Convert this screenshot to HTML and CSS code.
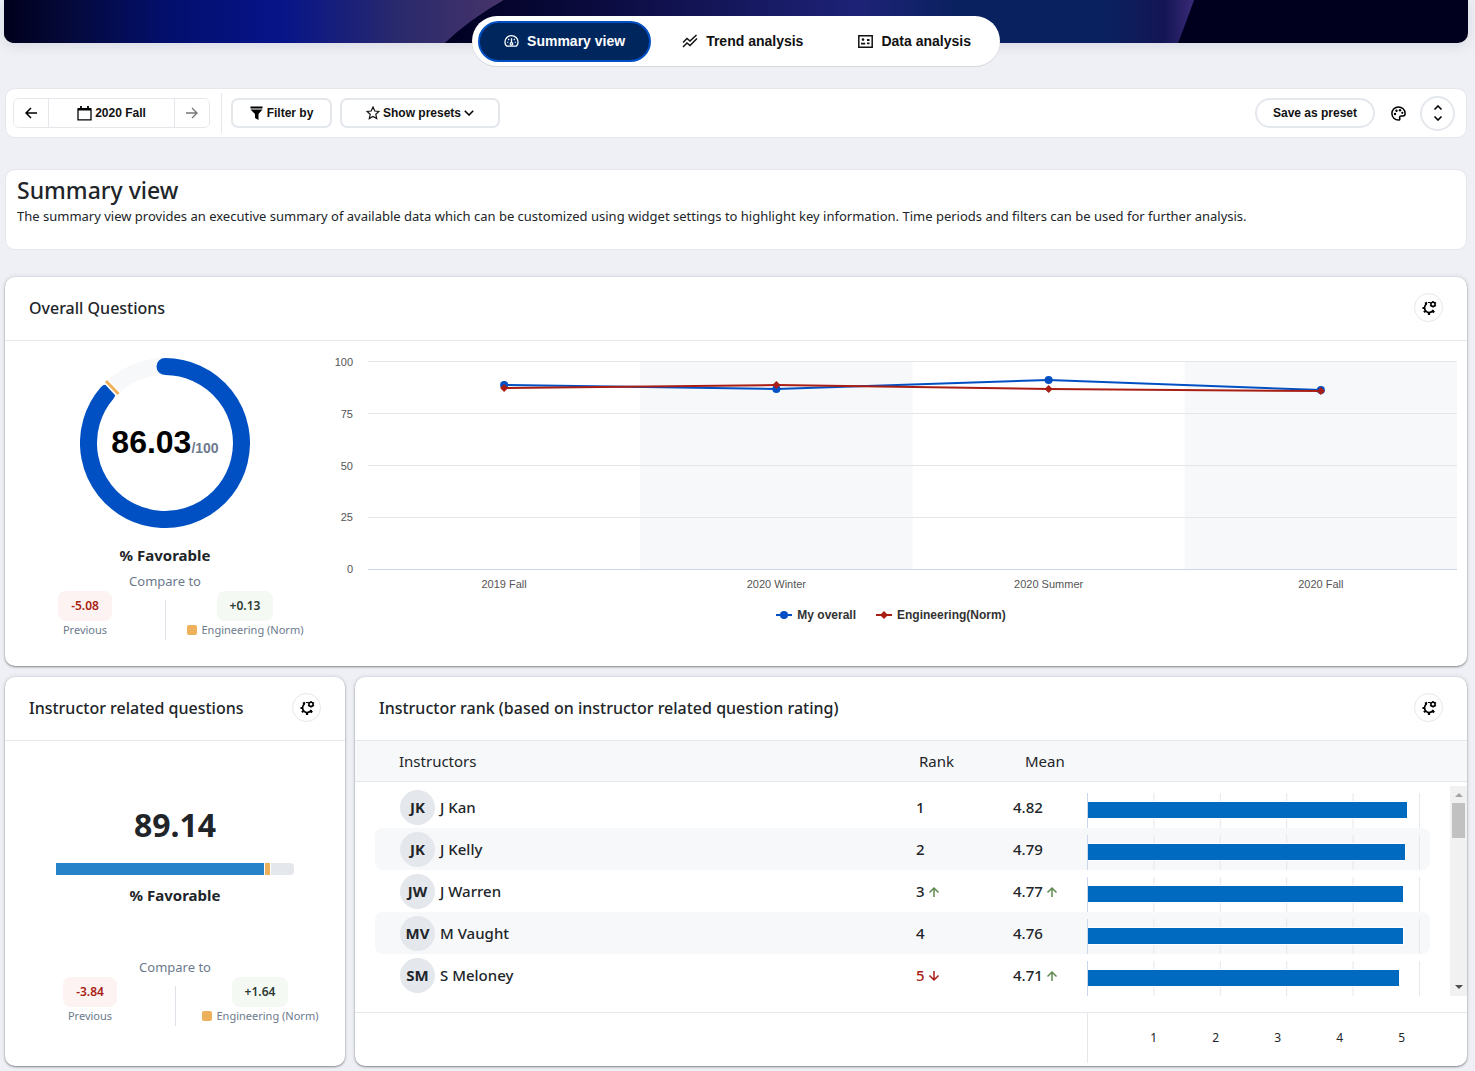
FILE: index.html
```html
<!DOCTYPE html>
<html lang="en">
<head>
<meta charset="utf-8">
<title>Summary view</title>
<meta name="viewport" content="width=device-width, initial-scale=1">
<link rel="stylesheet" href="styles.css">
</head>
<body>
<svg class="sprite" aria-hidden="true">
  <symbol id="gear" viewBox="0 0 16 16">
    <path d="M5.6 3.9A4.7 4.7 0 1 0 12.4 10" fill="none" stroke="#000" stroke-width="1.7"/>
    <path d="M4.5 2.3l1 1.8M1.5 8h2M3 12.2l1.3-1.2M8 12.8v2.2M13.2 12.4L11.6 11M8 3V2" stroke="#000" stroke-width="2.2"/>
    <circle cx="12" cy="4.3" r="2.1" fill="none" stroke="#000" stroke-width="1.6"/>
    <path d="M12 1v1M12 6.6v1M9 2.6l.8.5M15 2.6l-.8.5M9 6l.8-.5M15 6l-.8-.5" stroke="#000" stroke-width="1.3"/>
  </symbol>
  <symbol id="up" viewBox="0 0 12 12"><path d="M6 11V2M1.500 6.500L6 2l4.500 4.500" fill="none" stroke="currentColor" stroke-width="1.500"/></symbol>
  <symbol id="down" viewBox="0 0 12 12"><path d="M6 1v9M1.500 5.500L6 10l4.500-4.500" fill="none" stroke="currentColor" stroke-width="1.500"/></symbol>
</svg>

<header class="banner">
  <svg class="banner-art" viewBox="0 0 1464 43" preserveAspectRatio="none" aria-hidden="true">
    <defs>
      <linearGradient id="g1"><stop offset="0" stop-color="#00001c"/><stop offset=".13" stop-color="#05093a"/><stop offset=".32" stop-color="#030f6b"/><stop offset=".55" stop-color="#061489"/><stop offset=".8" stop-color="#2b2a6c"/><stop offset="1" stop-color="#473469"/></linearGradient>
      <linearGradient id="g2"><stop offset="0" stop-color="#000022"/><stop offset=".2" stop-color="#0b0b3f"/><stop offset=".55" stop-color="#1e2277"/><stop offset=".68" stop-color="#0a2160"/><stop offset=".88" stop-color="#0a2160"/><stop offset=".96" stop-color="#141554"/><stop offset="1" stop-color="#3a2a78"/></linearGradient>
    </defs>
    <path d="M0 0H1464V43H0z" fill="#00001e"/>
    <path d="M0 0H500Q465 20 441 43H0z" fill="url(#g1)"/>
    <path d="M500 0H1190Q1183 20 1174 43H441Q465 20 500 0z" fill="url(#g2)"/>
  </svg>
</header>

<nav class="tabs" aria-label="Views">
  <button class="tab active" type="button">
    <svg width="15" height="14" viewBox="0 0 16 14" fill="none" stroke="currentColor" stroke-width="1.4"><path d="M3 12.5Q1 11 1 8A7 6.8 0 0 1 15 8Q15 11 13 12.5z"/><path d="M8 4v5M3.5 8.500h1M11.500 8.500h1M4.500 5l1 .8M11.500 5l-1 .8"/><circle cx="8" cy="10" r="1.300"/></svg>
    Summary view
  </button>
  <button class="tab" type="button">
    <svg width="16" height="14" viewBox="0 0 16 14" fill="none" stroke="currentColor" stroke-width="1.5"><path d="M1 8.500l4-4 3 2.500 6.500-6"/><path d="M1 13l4-4 3 2.500 7-7"/></svg>
    Trend analysis
  </button>
  <button class="tab" type="button">
    <svg width="15" height="13" viewBox="0 0 15 13" fill="none" stroke="currentColor" stroke-width="1.500"><path d="M.8.8h13.400v11.400H.8z"/><circle cx="5" cy="4.600" r="1.300" fill="currentColor" stroke="none"/><path d="M3 8.600h4.200M9 5h2.500M9 8.400h2.500" stroke-width="1.800"/></svg>
    Data analysis
  </button>
</nav>

<main class="page">
  <section class="toolbar" aria-label="Filters">
    <div class="period">
      <button class="period-step" type="button" aria-label="Previous period"><svg width="12" height="12" viewBox="0 0 12 12" fill="none" stroke="#000" stroke-width="1.500"><path d="M12 6H1M6 1L1 6l5 5"/></svg></button>
      <button class="period-name" type="button"><svg width="15" height="15" viewBox="0 0 15 15" fill="none" stroke="#000"><path d="M1 3h13v10.800H1z" stroke-width="1.300"/><path d="M1 3.300h13" stroke-width="2.500"/><path d="M4 0v3M11 0v3" stroke-width="1.800"/></svg>2020 Fall</button>
      <button class="period-step muted" type="button" aria-label="Next period"><svg width="12" height="12" viewBox="0 0 12 12" fill="none" stroke="currentColor" stroke-width="1.300"><path d="M0 6h11M6 1l5 5-5 5"/></svg></button>
    </div>
    <div class="rule"></div>
    <button class="btn btn-filter" type="button"><svg width="13" height="15" viewBox="0 0 13 15"><path d="M.5.500h12v2H.5zM.5 3.500h12L8.500 8v6L5 12V8z"/></svg>Filter by</button>
    <button class="btn btn-presets" type="button"><svg width="14" height="14" viewBox="0 0 14 14" fill="none" stroke="#111" stroke-width="1.200"><path d="M7 1l1.800 4 4.200.4-3.200 2.900.9 4.300L7 10.400l-3.700 2.200.9-4.300L1 5.400 5.200 5z"/></svg>Show presets<svg width="10" height="6" viewBox="0 0 10 6" fill="none" stroke="#000" stroke-width="1.600"><path d="M.8.8L5 5 9.200.8"/></svg></button>
    <div class="spacer"></div>
    <button class="btn btn-save" type="button">Save as preset</button>
    <button class="palette" type="button" aria-label="Colours"><svg width="15" height="15" viewBox="0 0 15 15"><path d="M7.500.9a6.600 6.600 0 1 0 0 13.200c1 0 1.500-.6 1.300-1.500-.3-1.300-.3-2.500 1.200-2.600h2c1.500 0 2.100-1 2.100-2.500A6.600 6.600 0 0 0 7.500.9z" fill="none" stroke="#000" stroke-width="1.500"/><circle cx="4" cy="8" r="1.200"/><circle cx="5.500" cy="4.700" r="1.200"/><circle cx="9" cy="4.300" r="1.200"/><circle cx="11.300" cy="6.800" r="1.100"/></svg></button>
    <button class="round" type="button" aria-label="Expand"><svg width="10" height="16" viewBox="0 0 10 16" fill="none" stroke="#000" stroke-width="1.600"><path d="M1.500 4.500L5 1l3.500 3.500M1.500 11.500L5 15l3.500-3.500"/></svg></button>
  </section>

  <section class="intro">
    <h1>Summary view</h1>
    <p>The summary view provides an executive summary of available data which can be customized using widget settings to highlight key information. Time periods and filters can be used for further analysis.</p>
  </section>

  <section class="card overall">
    <div class="card-head"><h2>Overall Questions</h2><button class="gear" type="button" aria-label="Settings"><svg width="16" height="16"><use href="#gear"/></svg></button></div>
    <div class="overall-body">
      <div class="gauge">
        <div class="ring">
          <svg viewBox="0 0 170 170" aria-hidden="true">
            <circle cx="85" cy="85" r="76.500" fill="none" stroke="#f7f8fa" stroke-width="17"/>
            <path d="M85 8.500A76.500 76.500 0 1 1 27 35.100" fill="none" stroke="#0050c4" stroke-width="17" stroke-linecap="round"/>
            <path d="M25.500 22.500L38.500 36.500" stroke="#fff" stroke-width="6"/>
            <path d="M26 23L38.500 36" stroke="#edb15c" stroke-width="3"/>
          </svg>
          <p class="ring-value">86.03<small>/100</small></p>
        </div>
        <p class="favorable">% Favorable</p>
        <p class="compare-title">Compare to</p>
        <div class="compare">
          <div class="compare-item"><span class="badge bad">-5.08</span><span>Previous</span></div>
          <div class="compare-item"><span class="badge good">+0.13</span><span class="norm">Engineering (Norm)</span></div>
        </div>
      </div>
      <figure class="chart">
        <div class="y-axis"><span>100</span><span>75</span><span>50</span><span>25</span><span>0</span></div>
        <svg class="plot" role="img" aria-label="Overall score per period">
          <rect x="25%" y="1" width="25%" height="208" fill="#f7f8fa"/><rect x="75%" y="1" width="25%" height="208" fill="#f7f8fa"/>
          <path d="M0 .5H4000M0 52.500H4000M0 104.500H4000M0 156.500H4000" stroke="#e6e6e6"/>
          <path d="M0 208.500H4000" stroke="#ccd6eb"/>
          <g stroke="#0050c4" stroke-width="2"><line x1="12.500%" y1="24" x2="37.500%" y2="28"/><line x1="37.500%" y1="28" x2="62.500%" y2="19"/><line x1="62.500%" y1="19" x2="87.500%" y2="29"/></g>
          <g fill="#0050c4"><circle cx="12.500%" cy="24" r="4"/><circle cx="37.500%" cy="28" r="4"/><circle cx="62.500%" cy="19" r="4"/><circle cx="87.500%" cy="29" r="4"/></g>
          <g stroke="#a91e14" stroke-width="2"><line x1="12.500%" y1="27" x2="37.500%" y2="24"/><line x1="37.500%" y1="24" x2="62.500%" y2="28"/><line x1="62.500%" y1="28" x2="87.500%" y2="30"/></g>
          <g fill="#a91e14">
            <svg x="12.500%" y="27" overflow="visible"><path d="M0-4L4 0 0 4-4 0z"/></svg>
            <svg x="37.500%" y="24" overflow="visible"><path d="M0-4L4 0 0 4-4 0z"/></svg>
            <svg x="62.500%" y="28" overflow="visible"><path d="M0-4L4 0 0 4-4 0z"/></svg>
            <svg x="87.500%" y="30" overflow="visible"><path d="M0-4L4 0 0 4-4 0z"/></svg>
          </g>
        </svg>
        <div class="x-axis"><span>2019 Fall</span><span>2020 Winter</span><span>2020 Summer</span><span>2020 Fall</span></div>
        <figcaption class="legend">
          <span><svg width="16" height="8" viewBox="0 0 16 8"><path d="M0 4h16" stroke="#0050c4" stroke-width="2"/><circle cx="8" cy="4" r="4" fill="#0050c4"/></svg>My overall</span>
          <span><svg width="16" height="8" viewBox="0 0 16 8"><path d="M0 4h16" stroke="#a91e14" stroke-width="2"/><path d="M8 0l4 4-4 4-4-4z" fill="#a91e14"/></svg>Engineering(Norm)</span>
        </figcaption>
      </figure>
    </div>
  </section>

  <div class="row">
    <section class="card related">
      <div class="card-head"><h2>Instructor related questions</h2><button class="gear" type="button" aria-label="Settings"><svg width="16" height="16"><use href="#gear"/></svg></button></div>
      <div class="related-body">
        <p class="score">89.14</p>
        <div class="meter"><span class="meter-fill"></span><span class="meter-norm"></span><span class="meter-rest"></span></div>
        <p class="favorable">% Favorable</p>
        <p class="compare-title">Compare to</p>
        <div class="compare">
          <div class="compare-item"><span class="badge bad">-3.84</span><span>Previous</span></div>
          <div class="compare-item"><span class="badge good">+1.64</span><span class="norm">Engineering (Norm)</span></div>
        </div>
      </div>
    </section>

    <section class="card rank">
      <div class="card-head"><h2>Instructor rank (based on instructor related question rating)</h2><button class="gear" type="button" aria-label="Settings"><svg width="16" height="16"><use href="#gear"/></svg></button></div>
      <div class="rank-body">
        <table>
          <thead><tr><th>Instructors</th><th>Rank</th><th>Mean</th><th></th></tr></thead>
          <tbody>
            <tr><td><span class="avatar">JK</span>J Kan</td><td>1</td><td>4.82</td><td><div class="track"><div class="bar" style="width:96.4%"></div></div></td></tr>
            <tr><td><span class="avatar">JK</span>J Kelly</td><td>2</td><td>4.79</td><td><div class="track"><div class="bar" style="width:95.8%"></div></div></td></tr>
            <tr><td><span class="avatar">JW</span>J Warren</td><td>3<svg class="arrow"><use href="#up"/></svg></td><td>4.77<svg class="arrow"><use href="#up"/></svg></td><td><div class="track"><div class="bar" style="width:95.4%"></div></div></td></tr>
            <tr><td><span class="avatar">MV</span>M Vaught</td><td>4</td><td>4.76</td><td><div class="track"><div class="bar" style="width:95.2%"></div></div></td></tr>
            <tr><td><span class="avatar">SM</span>S Meloney</td><td class="fall">5<svg class="arrow"><use href="#down"/></svg></td><td>4.71<svg class="arrow"><use href="#up"/></svg></td><td><div class="track"><div class="bar" style="width:94.2%"></div></div></td></tr>
          </tbody>
          <tfoot><tr><td></td><td></td><td></td><td class="scale"><span>1</span><span>2</span><span>3</span><span>4</span><span>5</span></td></tr></tfoot>
        </table>
        <div class="scrollbar" aria-hidden="true"><i class="tri-up"></i><i class="thumb"></i><i class="tri-down"></i></div>
      </div>
    </section>
  </div>
</main>
</body>
</html>
```
FILE: styles.css
```css
* { box-sizing: border-box; }

body {
  margin: 0;
  padding: 0 7px 0 4px;
  background: #eff0f5;
  color: #212529;
  font: 14px/20px "Noto Sans", "Open Sans", sans-serif;
}

h1, h2, p, figure { margin: 0; }

button {
  font: bold 12px/20px "Liberation Sans", Arial, sans-serif;
  color: #111;
  background: #fff;
  border: 0;
  padding: 0;
  cursor: pointer;
}

svg { display: block; flex: none; }
.sprite { position: absolute; width: 0; height: 0; }

/* Banner and view tabs */
.banner {
  height: 43px;
  border-radius: 0 0 10px 10px;
  box-shadow: 0 2px 14px rgba(30, 40, 90, .12);
  overflow: hidden;
}
.banner-art { width: 100%; height: 100%; }

.tabs {
  position: relative;
  display: flex;
  width: max-content;
  height: 50px;
  margin: -27px auto 22px;
  padding: 5px 5px 4px 6px;
  background: #fff;
  border-radius: 25px;
  box-shadow: 0 1px 1px rgba(0, 0, 0, .1);
}
.tab {
  display: flex;
  align-items: center;
  gap: 8px;
  height: 41px;
  padding: 0 24px 1px 31px;
  border-radius: 21px;
  font-size: 14px;
}
.tab.active {
  padding: 0 24px 1px;
  background: #00265e;
  color: #fff;
  border: 2px solid #0050c4;
}

.page { padding: 0 1px 5px; }

/* Toolbar */
.toolbar {
  display: flex;
  align-items: center;
  height: 50px;
  padding: 0 11px 0 7px;
  background: #fff;
  border: 1px solid #e4e7ec;
  border-radius: 10px;
}
.period {
  display: flex;
  height: 30px;
  border: 1px solid #e4e7ec;
  border-radius: 6px;
  overflow: hidden;
}
.period-step { width: 34px; display: grid; place-items: center; }
.period-name {
  display: flex;
  align-items: center;
  justify-content: center;
  gap: 3px;
  width: 127px;
  border: solid #e4e7ec;
  border-width: 0 1px;
}
.muted { color: #777; }
.rule { width: 1px; height: 40px; margin: 0 9px 0 11px; background: #e4e7ec; }
.btn {
  display: flex;
  align-items: center;
  justify-content: center;
  gap: 4px;
  height: 30px;
  border: 2px solid #e4e7ec;
  border-radius: 7px;
}
.btn-filter { width: 101px; margin-right: 8px; }
.btn-presets { width: 160px; gap: 3px; }
.btn-save { width: 120px; border-radius: 15px; }
.spacer { flex: 1; }
.palette { margin: 0 14px 0 16px; }
.round {
  display: grid;
  place-items: center;
  width: 35px;
  height: 35px;
  border: 2px solid #e4e7ec;
  border-radius: 50%;
}

/* Intro */
.intro {
  height: 81px;
  margin: 31px 0 27px;
  padding: 5px 11px;
  background: #fff;
  border: 1px solid #e4e7ec;
  border-radius: 10px;
}
.intro h1 { font-size: 23px; line-height: 30px; font-weight: 500; }
.intro p { font-size: 13px; line-height: 22px; }

/* Cards */
.card {
  background: #fff;
  border-radius: 10px;
  box-shadow: 0 1px 2px rgba(0, 0, 0, .4), 0 0 4px rgba(60, 70, 110, .18);
}
.card-head {
  display: flex;
  align-items: center;
  justify-content: space-between;
  height: 64px;
  padding: 0 24px 2px;
  border-bottom: 1px solid #e4e7ec;
}
.card-head h2 { font-size: 16px; line-height: 22px; font-weight: 500; }
.gear {
  display: grid;
  place-items: center;
  width: 29px;
  height: 29px;
  border: 1px solid #e4e7ec;
  border-radius: 50%;
}
.row { display: grid; grid-template-columns: 340fr 1112fr; gap: 10px; margin-top: 11px; }

/* Gauge */
.overall-body { display: flex; height: 325px; padding-right: 10px; }
.gauge { width: 320px; padding-top: 17px; flex: none; }
.ring { display: grid; width: 170px; height: 170px; margin: 0 auto 15px; }
.ring svg, .ring-value { grid-area: 1 / 1; }
.ring-value {
  place-self: center;
  padding-top: 3px;
  font: bold 32px/36px "Liberation Sans", Arial, sans-serif;
  color: #000;
}
.ring-value small { font-size: 14px; color: #6c7a8d; }
.favorable { font-size: 15px; line-height: 24px; font-weight: 700; text-align: center; }
.compare-title { font-size: 13px; line-height: 20px; color: #6c7a8d; text-align: center; }
.favorable + .compare-title { margin-top: 4px; }
.compare {
  display: grid;
  grid-template-columns: 1fr 1fr;
  padding-bottom: 1px;
  font-size: 11px;
  line-height: 18px;
  color: #6c7a8d;
  background: linear-gradient(#dfe2e8, #dfe2e8) center bottom / 1px 40px no-repeat;
}
.compare-item { display: flex; flex-direction: column; align-items: center; white-space: nowrap; }
.badge {
  height: 30px;
  padding: 0 13px;
  border-radius: 8px;
  font-size: 12px;
  font-weight: 600;
  line-height: 30px;
}
.bad { color: #a91e14; background: #fcf3f2; }
.good { color: #2c3a33; background: #f4f9f4; }
.norm { display: flex; align-items: center; gap: 5px; }
.norm::before { content: ""; width: 10px; height: 10px; border-radius: 2px; background: #edb15c; }

/* Line chart */
.chart {
  flex: 1;
  display: grid;
  grid-template: 209px 30px 30px / 28px 1fr;
  column-gap: 15px;
  padding-top: 20px;
  font: 11px/14px "Liberation Sans", Arial, sans-serif;
  color: #555;
}
.y-axis { display: flex; flex-direction: column; justify-content: space-between; margin: -6px 0; text-align: right; }
.plot { width: 100%; height: 209px; }
.x-axis { grid-column: 2; display: grid; grid-template-columns: repeat(4, 1fr); text-align: center; padding-top: 7px; }
.legend { grid-column: 1 / -1; display: flex; align-items: flex-start; justify-content: center; gap: 20px; padding-top: 8px; font-size: 12px; font-weight: bold; color: #333; }
.legend span { display: flex; align-items: center; gap: 5px; }

/* Score meter */
.related-body { height: 325px; padding-top: 62px; }
.score { font-size: 32px; line-height: 44px; font-weight: 700; text-align: center; }
.meter { display: flex; gap: 1px; height: 12px; margin: 16px 51px 8px; }
.meter-fill { flex: 208; background: #2783c9; }
.meter-norm { flex: 5; background: #edb15c; }
.meter-rest { flex: 23; background: #e4e7ec; border-radius: 0 4px 4px 0; }
.related .compare-title { margin-top: 50px; }

/* Rank table */
.rank-body { position: relative; }
table, thead, tbody, tfoot { display: block; }
tr { display: grid; grid-template-columns: 541fr 97fr 74fr 343fr; }
th, td { padding: 0; text-align: left; min-width: 0; }
thead { padding: 0 37px 0 20px; background: #f7f8fa; border-bottom: 1px solid #e4e7ec; }
th { font-size: 15px; line-height: 40px; font-weight: 400; }
th:first-child { padding-left: 24px; }
th:nth-child(2) { padding-left: 3px; }
th:nth-child(3) { padding-left: 12px; }
tbody { padding: 4px 37px 16px 20px; font-size: 15px; font-weight: 500; }
tbody tr { height: 42px; border-radius: 8px; }
tbody tr:nth-child(even) { background: #f7f8fa; }
tbody td { display: flex; align-items: center; }
tbody td:first-child { padding-left: 25px; }
.avatar {
  display: grid;
  place-items: center;
  width: 35px;
  height: 35px;
  margin-right: 5px;
  border-radius: 50%;
  background: #e4e7ec;
  font-weight: 700;
}
.arrow { width: 12px; height: 12px; margin: 2px 0 0 3px; color: #5f8a50; }
.fall, .fall .arrow { color: #a91e14; }
.track {
  display: flex;
  align-items: center;
  width: 97%;
  height: 35px;
  margin-top: 6px;
  border-left: 1px solid #ccd6eb;
  background: linear-gradient(to right, transparent calc(100% - 1px), #e4e7ec 0) 0 0 / 20% 100%;
}
.bar { height: 18px; border: 1px solid #fff; border-left: 0; background: #006ac1; }
tfoot { padding: 0 37px 0 20px; border-top: 1px solid #e4e7ec; }
.scale {
  display: grid;
  grid-template-columns: repeat(5, 62fr) 25fr;
  height: 50px;
  padding-left: 7px;
  border-left: 1px solid #e4e7ec;
  font-size: 12px;
  line-height: 50px;
}
.scale span { text-align: right; }
.scrollbar {
  position: absolute;
  top: 45px;
  right: 0;
  width: 17px;
  height: 210px;
  display: flex;
  flex-direction: column;
  align-items: center;
  background: #f1f1f1;
}
.tri-up { margin: 7px 0 6px; border: 4px solid transparent; border-top: 0; border-bottom-color: #a3a3a3; }
.thumb { width: 13px; height: 35px; background: #c1c1c1; }
.tri-down { margin: auto 0 7px; border: 4px solid transparent; border-bottom: 0; border-top-color: #505050; }
```
